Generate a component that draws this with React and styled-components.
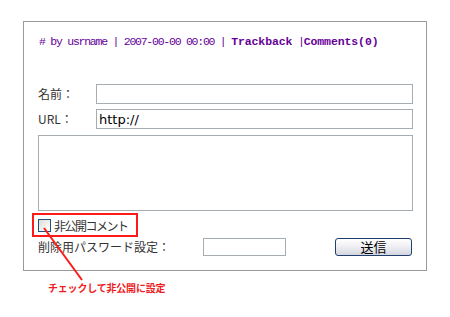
import React from "react";
import styled, { createGlobalStyle } from "styled-components";

const Global = createGlobalStyle`
  html, body { margin: 0; padding: 0; background: #fff; }
  body { font-family: "Noto Sans CJK JP", "Noto Sans", sans-serif; }
`;

const Page = styled.div`
  position: relative;
  width: 450px;
  height: 317px;
  box-sizing: border-box;
  padding: 21px 0 0 23px;
  overflow: hidden;
`;

const Box = styled.div`
  width: 404px;
  height: 250px;
  box-sizing: border-box;
  border: 1px solid #9a9a9a;
  padding: 14px 13px 0 14px;
`;

const Meta = styled.div`
  font-family: "Liberation Mono", "DejaVu Sans Mono", monospace;
  font-size: 11.5px;
  line-height: 12px;
  letter-spacing: -1.25px;
  color: #660099;
  white-space: pre;
  padding-left: 1px;
`;

const Strong = styled.b`
  font-weight: bold;
  letter-spacing: -0.1px;
`;

const Row = styled.div`
  display: grid;
  grid-template-columns: 58px 317px;
  align-items: center;
  margin-top: ${(p) => p.$top}px;
`;

const Label = styled.span`
  font-size: 12px;
  line-height: 14px;
  color: #333;
`;

const TextInput = styled.input`
  box-sizing: border-box;
  width: ${(p) => p.$w}px;
  height: ${(p) => p.$h || 20}px;
  border: 1px solid #a5acb2;
  margin: 0;
  padding: 0 2px;
  font-family: "DejaVu Sans", "Noto Sans", sans-serif;
  font-size: 13px;
  color: #000;
  background: #fff;
  outline: none;
`;

const Area = styled.textarea`
  display: block;
  box-sizing: border-box;
  width: 375px;
  height: 76px;
  margin: 6px 0 0;
  border: 1px solid #a5acb2;
  resize: none;
  outline: none;
`;

const CheckLabel = styled.label`
  display: inline-flex;
  align-items: center;
  box-sizing: border-box;
  height: 24px;
  margin: 2px 0 0 -6px;
  padding: 0 8px 0 4px;
  border: 2px solid #ff1a1a;
  gap: 3px;
  font-size: 12px;
  letter-spacing: -1.5px;
  color: #333;
`;

const Check = styled.input`
  appearance: none;
  width: 13px;
  height: 13px;
  margin: 1px 0 0;
  box-sizing: border-box;
  border: 1px solid #1c5180;
  background: linear-gradient(135deg, #dcdcd4 0%, #f4f4f0 60%, #fff 100%);
`;

const PassRow = styled.div`
  display: flex;
  align-items: center;
  margin-top: 1px;
`;

const PassLabel = styled(Label)`
  width: 165px;
  flex: none;
`;

const SendButton = styled.button`
  box-sizing: border-box;
  width: 77px;
  height: 18px;
  margin: 0 1px 0 auto;
  padding: 0;
  border: 1px solid #1f3f6f;
  border-radius: 3px;
  background: linear-gradient(#ffffff 0%, #f0f0f4 45%, #d6d6e2 100%);
  font-family: "Noto Sans CJK JP", sans-serif;
  font-size: 13px;
  line-height: 16px;
  color: #000;
`;

const Note = styled.div`
  margin: 11px 0 0 25px;
  font-size: 10px;
  line-height: 12px;
  font-weight: bold;
  color: #ee1c24;
  letter-spacing: -0.2px;
`;

const Pointer = styled.svg`
  position: absolute;
  left: 0;
  top: 0;
  pointer-events: none;
`;

export default function App() {
  return (
    <Page>
      <Global />
      <Box>
        <Meta>
          {"# by usrname | 2007-00-00 00:00 | "}
          <Strong>Trackback</Strong>
          {" |"}
          <Strong>Comments(0)</Strong>
        </Meta>
        <Row $top={36}>
          <Label>名前：</Label>
          <TextInput $w={317} />
        </Row>
        <Row $top={5}>
          <Label>URL：</Label>
          <TextInput $w={317} defaultValue="http://" />
        </Row>
        <Area />
        <CheckLabel>
          <Check type="checkbox" />
          非公開コメント
        </CheckLabel>
        <PassRow>
          <PassLabel>削除用パスワード設定：</PassLabel>
          <TextInput $w={83} $h={18} type="password" />
          <SendButton>送信</SendButton>
        </PassRow>
      </Box>
      <Note>チェックして非公開に設定</Note>
      <Pointer width="450" height="317" viewBox="0 0 450 317">
        <line x1="44" y1="228" x2="82" y2="280" stroke="#ff1a1a" strokeWidth="2" />
      </Pointer>
    </Page>
  );
}
